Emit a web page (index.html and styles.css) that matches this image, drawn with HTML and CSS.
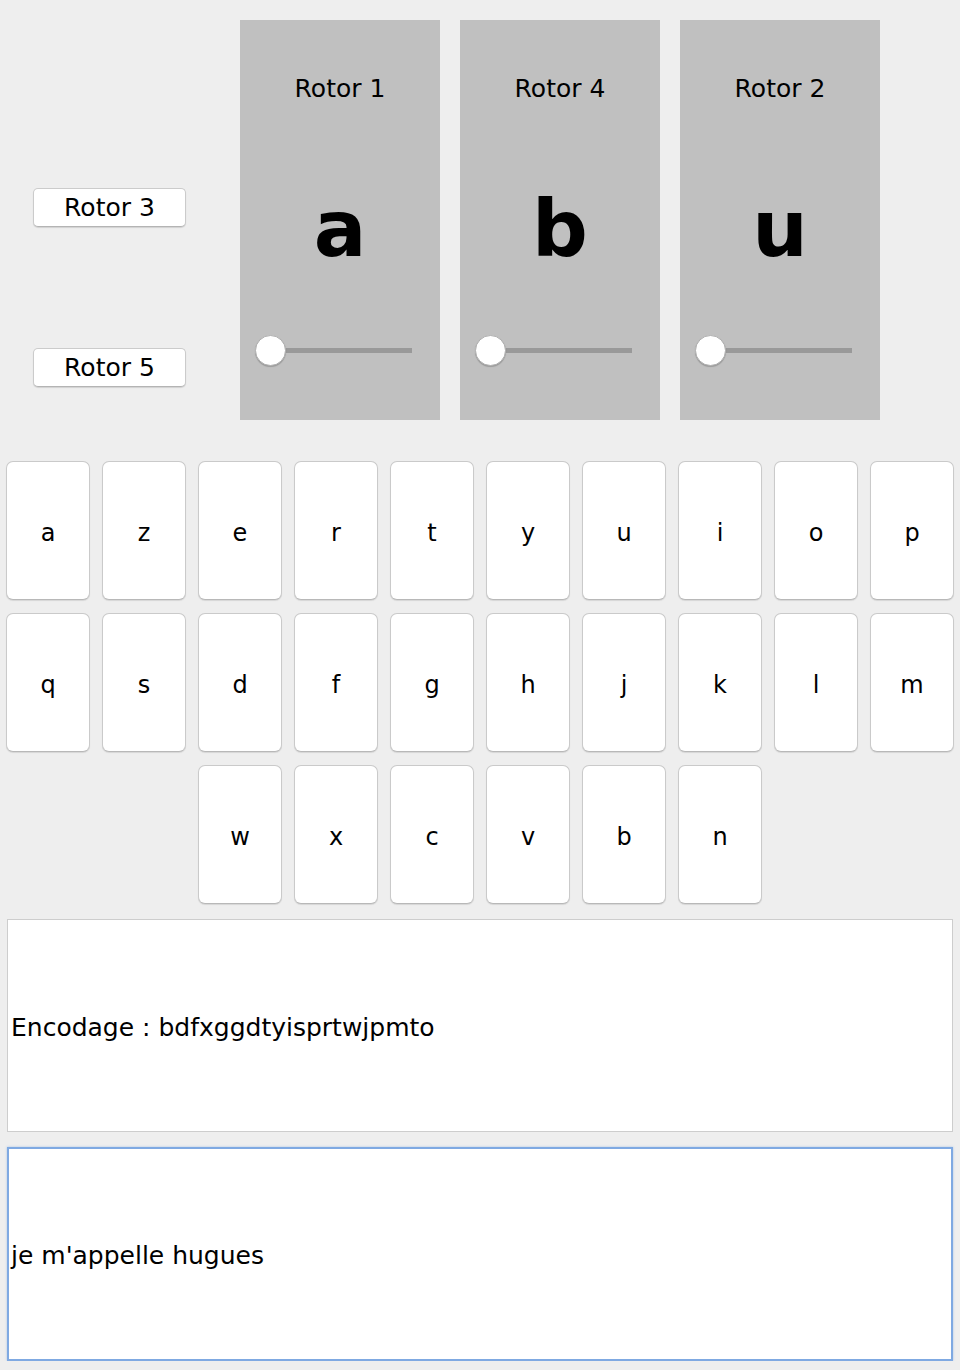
FILE: index.html
```html
<!DOCTYPE html>
<html>
<head>
<meta charset="utf-8">
<link rel="stylesheet" href="styles.css">
</head>
<body>
<div class="top">
  <div class="side">
    <button class="btn">Rotor 3</button>
    <button class="btn">Rotor 5</button>
  </div>
  <div class="rotor">
    <div class="rotor-title">Rotor 1</div>
    <div class="rotor-letter">a</div>
    <div class="slider"><div class="track"></div><div class="thumb"></div></div>
  </div>
  <div class="rotor">
    <div class="rotor-title">Rotor 4</div>
    <div class="rotor-letter">b</div>
    <div class="slider"><div class="track"></div><div class="thumb"></div></div>
  </div>
  <div class="rotor">
    <div class="rotor-title">Rotor 2</div>
    <div class="rotor-letter">u</div>
    <div class="slider"><div class="track"></div><div class="thumb"></div></div>
  </div>
</div>
<div class="keys">
  <div class="key">a</div><div class="key">z</div><div class="key">e</div><div class="key">r</div><div class="key">t</div><div class="key">y</div><div class="key">u</div><div class="key">i</div><div class="key">o</div><div class="key">p</div>
  <div class="key">q</div><div class="key">s</div><div class="key">d</div><div class="key">f</div><div class="key">g</div><div class="key">h</div><div class="key">j</div><div class="key">k</div><div class="key">l</div><div class="key">m</div>
  <div class="key first3">w</div><div class="key">x</div><div class="key">c</div><div class="key">v</div><div class="key">b</div><div class="key">n</div>
</div>
<div class="box output">Encodage : bdfxggdtyisprtwjpmto</div>
<div class="box input">je m'appelle hugues</div>
</body>
</html>
```
FILE: styles.css
```css
html, body {
  margin: 0;
  padding: 0;
  background: #eeeeee;
  font-family: "DejaVu Sans", "Liberation Sans", sans-serif;
  color: #000;
}
.top {
  display: flex;
  padding-top: 20px;
  height: 400px;
}
.side {
  width: 240px;
  display: flex;
  flex-direction: column;
  padding-left: 33px;
  box-sizing: border-box;
  padding-top: 168px;
  gap: 121px;
}
.btn {
  width: 153px;
  height: 39px;
  background: #fff;
  border: 1px solid #cbcbcb;
  border-bottom-color: #b4b4b4;
  border-radius: 5px;
  box-shadow: 0 1px 1px rgba(0,0,0,0.12);
  font-family: "DejaVu Sans", sans-serif;
  font-size: 25px;
  color: #000;
  padding: 0;
  line-height: 37px;
}
.rotor {
  width: 200px;
  height: 400px;
  background: #c0c0c0;
  margin-right: 20px;
  display: flex;
  flex-direction: column;
  align-items: center;
}
.rotor-title {
  margin-top: 55px;
  font-size: 25px;
  line-height: 28px;
  height: 28px;
}
.rotor-letter {
  margin-top: 66px;
  height: 120px;
  font-size: 78px;
  font-weight: bold;
  line-height: 120px;
  font-family: "DejaVu Sans", sans-serif;
}
.slider {
  margin-top: 46px;
  width: 200px;
  height: 32px;
  position: relative;
}
.track {
  position: absolute;
  left: 30px;
  top: 13px;
  width: 142px;
  height: 5px;
  background: #999999;
}
.thumb {
  position: absolute;
  left: 15px;
  top: 0;
  width: 29px;
  height: 29px;
  background: #fff;
  border: 1px solid #b0b0b0;
  border-radius: 50%;
  box-shadow: 0 1px 1px rgba(0,0,0,0.2);
}
.keys {
  display: grid;
  grid-template-columns: repeat(10, 84px);
  grid-auto-rows: 139px;
  column-gap: 12px;
  row-gap: 13px;
  padding: 41px 6px 0 6px;
}
.key {
  background: #fff;
  border: 1px solid #cacaca;
  border-bottom-color: #b8b8b8;
  border-radius: 7px;
  box-shadow: 0 1px 1px rgba(0,0,0,0.1);
  display: flex;
  align-items: center;
  justify-content: center;
  padding-top: 4px;
  font-size: 24px;
  box-sizing: border-box;
}
.first3 {
  grid-column-start: 3;
}
.box {
  margin: 15px 7px 0 7px;
  width: 946px;
  height: 213px;
  box-sizing: border-box;
  background: #fff;
  display: flex;
  align-items: center;
  padding-left: 3px;
  padding-top: 3px;
  font-size: 25px;
}
.output {
  border: 1px solid #cdcdcd;
}
.input {
  height: 214px;
  border: 2px solid #7fa9e2;
  box-shadow: 0 0 2px rgba(120,165,225,0.6);
  padding-left: 2px;
}
```
